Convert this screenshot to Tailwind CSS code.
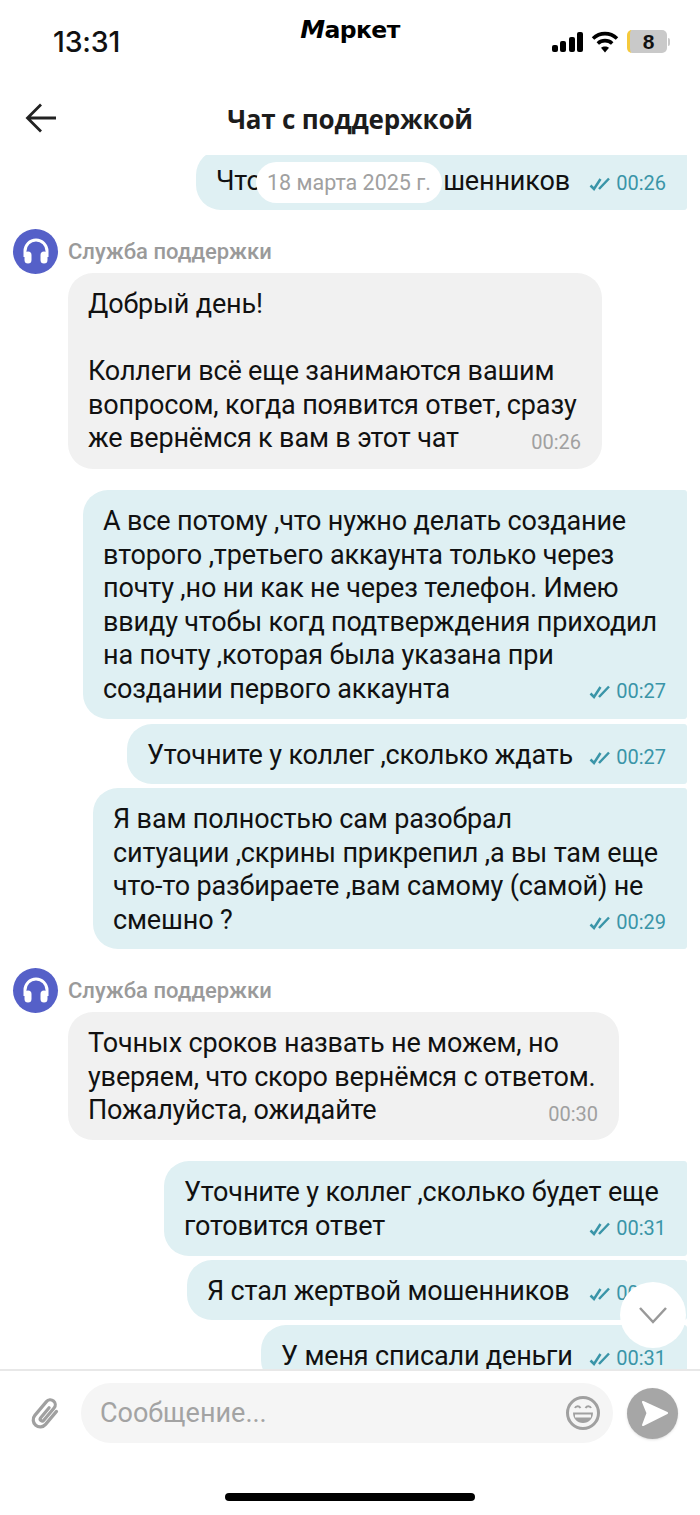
<!DOCTYPE html>
<html lang="en">
<head>
  <meta charset="UTF-8">
  <meta name="viewport" content="width=device-width, initial-scale=1.0">
  <title>Чат с поддержкой</title>
  <script src="https://cdn.jsdelivr.net/npm/@tailwindcss/browser@4"></script>
</head>
<body class="bg-white">
  <div class="relative w-[700px] h-[1515px] overflow-hidden bg-white font-['Roboto','Noto_Sans',sans-serif] text-[#111]">
    <!-- Status bar -->
    <div class="h-[100px] relative">
      <div class="flex items-start justify-between pl-[53px] pr-[30px] pt-[26px]">
        <span class="font-['Inter',sans-serif] text-[28.500px] leading-[32px] font-medium tracking-[-0.2px]">13:31</span>
        <div class="flex items-center gap-[8px] mt-[4px]">
          <svg width="31" height="20" viewBox="0 0 31 20" fill="#000"><rect x="0" y="13" width="6" height="7" rx="2"/><rect x="8" y="9" width="6" height="11" rx="2"/><rect x="17" y="5" width="6" height="15" rx="2"/><rect x="25" y="0" width="6" height="20" rx="2"/></svg>
          <svg width="28" height="22" viewBox="0 0 28 22" fill="none" stroke="#000" stroke-width="3.6"><path d="M2 7.5c7-6.500 17-6.500 24 0"/><path d="M6.800 12.500c4.200-3.800 10.200-3.800 14.400 0"/><path d="M14 21.500l-4-4.700c2.300-1.900 5.700-1.900 8 0z" fill="#000" stroke="none"/></svg>
          <div class="flex items-center">
            <div class="w-[40px] h-[23px] rounded-[5px] bg-[#c9c9c9] border-l-[3px] border-[#f5c93b] flex items-center justify-center font-['Liberation_Sans',sans-serif] text-[21px] font-bold leading-none">8</div>
            <div class="w-[2px] h-[8px] bg-[#c9c9c9] rounded-r-full ml-[1px]"></div>
          </div>
        </div>
      </div>
      <div class="absolute left-0 right-0 top-[17px] text-center font-['DejaVu_Sans',sans-serif] font-bold text-[23.500px] leading-[26px] tracking-[-0.6px] text-black"><span class="italic text-[25px]">М</span>аркет</div>
    </div>

    <!-- Header -->
    <div class="relative h-[55px] flex items-start justify-center">
      <svg class="absolute left-[24px] top-[2px]" width="34" height="32" viewBox="0 0 34 32" fill="none" stroke="#222" stroke-width="2.800"><path d="M17 2.500L3.500 16 17 29.500M3.500 16H32"/></svg>
      <h1 class="font-['Open_Sans',sans-serif] text-[26px] leading-[38px] font-bold text-[#1c1c1c] tracking-[-0.2px]">Чат с поддержкой</h1>
    </div>

    <!-- Messages -->
    <div class="relative h-[1216px] overflow-hidden border-b-[2px] border-[#e8e8e8] text-[27px] leading-[33.500px] tracking-[-0.15px] whitespace-nowrap">
      <div class="flex flex-col items-end pr-[13px] -mt-[5px]">
        <div class="w-[491px] h-[60px] bg-[#dff0f3] rounded-l-[25px] rounded-r-[3px] pl-[20px] pr-[21px] pt-[15px]">
          <div class="flex justify-between items-baseline">
            <div class="w-[354px] flex justify-between"><span>Что</span><span>шенников</span></div>
            <span class="flex items-center gap-[6px] text-[20px] tracking-normal text-[#3a95a8] translate-y-[2px]"><svg width="21" height="16" viewBox="0 0 21 16" fill="none" stroke="#3a95a8" stroke-width="2.500"><path d="M1.500 9.500l3.500 3.500L11.500 3M10 13L20 2.500"/></svg>00:26</span>
          </div>
        </div>

        <div class="self-start flex items-center gap-[10px] pl-[13px] mt-[19px] h-[44px]">
          <div class="w-[45px] h-[45px] rounded-full bg-[#5560c8] flex items-center justify-center">
            <svg width="30" height="30" viewBox="0 0 30 30" fill="none" stroke="#fff" stroke-width="3"><path d="M4 21v-6a11 11 0 0122 0v6"/><rect x="5" y="17" width="4" height="9" rx="2" fill="#fff"/><rect x="21" y="17" width="4" height="9" rx="2" fill="#fff"/></svg>
          </div>
          <span class="text-[22px] tracking-normal text-[#9a9a9a] font-medium pt-[1px]">Служба поддержки</span>
        </div>

        <div class="self-start ml-[68px] w-[534px] h-[196px] bg-[#f1f1f1] rounded-[25px] pl-[20px] pr-[21px] pt-[15px]">
          <p>Добрый день!</p>
          <p>&nbsp;</p>
          <p>Коллеги всё еще занимаются вашим</p>
          <p>вопросом, когда появится ответ, сразу</p>
          <div class="flex justify-between items-baseline"><span>же вернёмся к вам в этот чат</span><span class="text-[20px] tracking-normal text-[#a0a0a0] translate-y-[2px]">00:26</span></div>
        </div>

        <div class="mt-[21px] w-[604px] h-[229px] bg-[#dff0f3] rounded-l-[25px] rounded-r-[3px] pl-[20px] pr-[21px] pt-[15px]">
          <p>А все потому ,что нужно делать создание</p>
          <p>второго ,третьего аккаунта только через</p>
          <p>почту ,но ни как не через телефон. Имею</p>
          <p>ввиду чтобы когд подтверждения приходил</p>
          <p>на почту ,которая была указана при</p>
          <div class="flex justify-between items-baseline"><span>создании первого аккаунта</span><span class="flex items-center gap-[6px] text-[20px] tracking-normal text-[#3a95a8] translate-y-[2px]"><svg width="21" height="16" viewBox="0 0 21 16" fill="none" stroke="#3a95a8" stroke-width="2.500"><path d="M1.500 9.500l3.500 3.500L11.500 3M10 13L20 2.500"/></svg>00:27</span></div>
        </div>

        <div class="mt-[5px] w-[560px] h-[60px] bg-[#dff0f3] rounded-l-[25px] rounded-r-[3px] pl-[20px] pr-[21px] pt-[15px]">
          <div class="flex justify-between items-baseline"><span>Уточните у коллег ,сколько ждать</span><span class="flex items-center gap-[6px] text-[20px] tracking-normal text-[#3a95a8] translate-y-[2px]"><svg width="21" height="16" viewBox="0 0 21 16" fill="none" stroke="#3a95a8" stroke-width="2.500"><path d="M1.500 9.500l3.500 3.500L11.500 3M10 13L20 2.500"/></svg>00:27</span></div>
        </div>

        <div class="mt-[4px] w-[594px] h-[161px] bg-[#dff0f3] rounded-l-[25px] rounded-r-[3px] pl-[20px] pr-[21px] pt-[15px]">
          <p>Я вам полностью сам разобрал</p>
          <p>ситуации ,скрины прикрепил ,а вы там еще</p>
          <p>что-то разбираете ,вам самому (самой) не</p>
          <div class="flex justify-between items-baseline"><span>смешно ?</span><span class="flex items-center gap-[6px] text-[20px] tracking-normal text-[#3a95a8] translate-y-[2px]"><svg width="21" height="16" viewBox="0 0 21 16" fill="none" stroke="#3a95a8" stroke-width="2.500"><path d="M1.500 9.500l3.500 3.500L11.500 3M10 13L20 2.500"/></svg>00:29</span></div>
        </div>

        <div class="self-start flex items-center gap-[10px] pl-[13px] mt-[19px] h-[44px]">
          <div class="w-[45px] h-[45px] rounded-full bg-[#5560c8] flex items-center justify-center">
            <svg width="30" height="30" viewBox="0 0 30 30" fill="none" stroke="#fff" stroke-width="3"><path d="M4 21v-6a11 11 0 0122 0v6"/><rect x="5" y="17" width="4" height="9" rx="2" fill="#fff"/><rect x="21" y="17" width="4" height="9" rx="2" fill="#fff"/></svg>
          </div>
          <span class="text-[22px] tracking-normal text-[#9a9a9a] font-medium pt-[1px]">Служба поддержки</span>
        </div>

        <div class="self-start ml-[68px] w-[551px] h-[128px] bg-[#f1f1f1] rounded-[25px] pl-[20px] pr-[21px] pt-[15px]">
          <p>Точных сроков назвать не можем, но</p>
          <p>уверяем, что скоро вернёмся с ответом.</p>
          <div class="flex justify-between items-baseline"><span>Пожалуйста, ожидайте</span><span class="text-[20px] tracking-normal text-[#a0a0a0] translate-y-[2px]">00:30</span></div>
        </div>

        <div class="mt-[21px] w-[523px] h-[95px] bg-[#dff0f3] rounded-l-[25px] rounded-r-[3px] pl-[20px] pr-[21px] pt-[15px]">
          <p>Уточните у коллег ,сколько будет еще</p>
          <div class="flex justify-between items-baseline"><span>готовится ответ</span><span class="flex items-center gap-[6px] text-[20px] tracking-normal text-[#3a95a8] translate-y-[2px]"><svg width="21" height="16" viewBox="0 0 21 16" fill="none" stroke="#3a95a8" stroke-width="2.500"><path d="M1.500 9.500l3.500 3.500L11.500 3M10 13L20 2.500"/></svg>00:31</span></div>
        </div>

        <div class="mt-[4px] w-[500px] h-[60px] bg-[#dff0f3] rounded-l-[25px] rounded-r-[3px] pl-[20px] pr-[21px] pt-[15px]">
          <div class="flex justify-between items-baseline"><span>Я стал жертвой мошенников</span><span class="flex items-center gap-[6px] text-[20px] tracking-normal text-[#3a95a8] translate-y-[2px]"><svg width="21" height="16" viewBox="0 0 21 16" fill="none" stroke="#3a95a8" stroke-width="2.500"><path d="M1.500 9.500l3.500 3.500L11.500 3M10 13L20 2.500"/></svg>00:31</span></div>
        </div>

        <div class="mt-[5px] w-[426px] h-[60px] bg-[#dff0f3] rounded-l-[25px] rounded-r-[3px] pl-[20px] pr-[21px] pt-[15px]">
          <div class="flex justify-between items-baseline"><span>У меня списали деньги</span><span class="flex items-center gap-[6px] text-[20px] tracking-normal text-[#3a95a8] translate-y-[2px]"><svg width="21" height="16" viewBox="0 0 21 16" fill="none" stroke="#3a95a8" stroke-width="2.500"><path d="M1.500 9.500l3.500 3.500L11.500 3M10 13L20 2.500"/></svg>00:31</span></div>
        </div>
      </div>

      <!-- Sticky date -->
      <div class="absolute top-[7px] left-[256px] w-[186px] h-[41px] rounded-full bg-white flex items-center justify-center text-[21.500px] tracking-normal text-[#a0a0a0]">18 марта 2025 г.</div>
      <!-- Scroll down -->
      <div class="absolute top-[1127px] left-[620px] w-[66px] h-[66px] rounded-full bg-white flex items-center justify-center">
        <svg width="30" height="18" viewBox="0 0 30 18" fill="none" stroke="#999" stroke-width="2.500"><path d="M2 2l13 14L28 2"/></svg>
      </div>
    </div>

    <!-- Input -->
    <div class="flex items-center pt-[12px] pl-[28px]">
      <svg width="36" height="36" viewBox="0 0 36 36" fill="none" stroke="#a0a0a0" stroke-width="3.200" stroke-linecap="round"><g transform="translate(18 18) rotate(40) translate(-15 -18)"><path d="M22 10v17a7 7 0 01-14 0V9a5 5 0 0110 0v16a2 2 0 01-4 0V12"/></g></svg>
      <div class="ml-[17px] w-[532px] h-[60px] rounded-full bg-[#f5f5f5] flex items-center justify-between pl-[19px] pr-[12px]">
        <span class="text-[27px] text-[#a3a3a3]">Сообщение...</span>
        <svg width="36" height="36" viewBox="0 0 36 36" fill="none" stroke="#a0a0a0" stroke-width="3"><circle cx="18" cy="18" r="15.500"/><path d="M8 17.500h20c0 6-4 10.500-10 10.500S8 23.500 8 17.500z" fill="#a0a0a0" stroke="none"/><path d="M10 21h16" stroke="#f5f5f5" stroke-width="3"/><path d="M10 13c1-2.500 4-2.500 5.500 0M20.500 13c1.500-2.500 4.500-2.500 5.500 0" stroke-width="2"/></svg>
      </div>
      <div class="ml-[14px] w-[51px] h-[51px] rounded-full bg-[#a6a6a6] flex items-center justify-center shadow-sm">
        <svg width="30" height="30" viewBox="0 0 30 30" fill="#fff" stroke="#fff" stroke-width="2" stroke-linejoin="round"><path d="M5 4l24 11L5 27l4.500-12z"/></svg>
      </div>
    </div>

    <!-- Home indicator -->
    <div class="absolute left-[225px] top-[1493px] w-[250px] h-[8px] rounded-full bg-black"></div>
  </div>
</body>
</html>
